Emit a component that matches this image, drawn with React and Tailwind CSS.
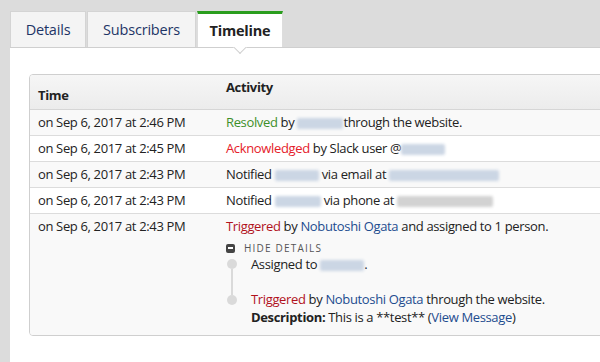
import React from 'react';

const Blur = ({ w, gray }) => (
  <span
    className={`inline-block align-middle h-[11px] rounded-[2px] blur-[1.5px] ${gray ? 'bg-[#d2d2d2]' : 'bg-[#cbd6e4]'}`}
    style={{ width: w }}
  />
);

const rows = [
  {
    time: 'on Sep 6, 2017 at 2:46 PM',
    activity: (
      <>
        <span className="text-[#3d8f2a]">Resolved</span> by <Blur w={46} />through the website.
      </>
    ),
  },
  {
    time: 'on Sep 6, 2017 at 2:45 PM',
    activity: (
      <>
        <span className="text-[#e5202a]">Acknowledged</span> by Slack user @<Blur w={44} />
      </>
    ),
  },
  {
    time: 'on Sep 6, 2017 at 2:43 PM',
    activity: (
      <>
        Notified <Blur w={44} /> via email at <Blur w={110} />
      </>
    ),
  },
  {
    time: 'on Sep 6, 2017 at 2:43 PM',
    activity: (
      <>
        Notified <Blur w={46} /> via phone at <Blur w={96} gray />
      </>
    ),
  },
];

const Tab = ({ label, active, width }) => (
  <div
    className={`h-[36px] flex items-center justify-center border border-b-0 text-[14.5px] tracking-[-0.2px] ${width} ${
      active
        ? 'bg-white border-[#ddd] border-t-[3px] border-t-[#2a9d1e] font-bold text-[#222] pt-[1px]'
        : 'bg-[#f4f4f4] border-[#d4d4d4] text-[#1e3466]'
    }`}
  >
    {label}
  </div>
);

export default function App() {
  return (
    <div className="w-[600px] h-[362px] overflow-hidden bg-[#dcdcdc] text-[13px] tracking-[-0.35px] text-[#222] font-['Open_Sans','Liberation_Sans',sans-serif]">
      <div className="flex gap-[1px] pl-[10px] pt-[11px]">
        <Tab label="Details" width="w-[76px]" />
        <Tab label="Subscribers" width="w-[109px]" />
        <Tab label="Timeline" width="w-[86px]" active />
      </div>
      <div className="relative ml-[10px] h-full bg-white border-t border-[#cfcfcf] pt-[26px] pl-[19px]">
        <div className="absolute left-[223px] -top-[1px] w-[14px] h-[8px] overflow-hidden">
          <div className="w-[10px] h-[10px] bg-white border-r border-b border-[#cfcfcf] rotate-45 mx-auto -mt-[5px]" />
        </div>
        <div className="w-[620px] border border-[#cfcfcf] rounded-[4px] overflow-hidden">
          <div className="flex h-[35px] bg-gradient-to-b from-[#f6f6f6] to-[#ececec] border-b border-[#d6d6d6] font-bold">
            <div className="w-[188px] pl-[8px] flex items-end pb-[4px]">Time</div>
            <div className="flex-1 pl-[8px] pt-[3px]">Activity</div>
          </div>
          {rows.map((r, i) => (
            <div
              key={i}
              className={`flex h-[26px] items-center border-b border-[#dcdcdc] ${i % 2 === 0 ? 'bg-[#f9f9f9]' : 'bg-white'}`}
            >
              <div className="w-[188px] pl-[8px]">{r.time}</div>
              <div className="flex-1 pl-[8px]">{r.activity}</div>
            </div>
          ))}
          <div className="flex bg-[#f9f9f9] h-[121px] pt-[3px] leading-[18px]">
            <div className="w-[188px] pl-[8px]">on Sep 6, 2017 at 2:43 PM</div>
            <div className="flex-1 pl-[8px]">
              <div>
                <span className="text-[#b1121c]">Triggered</span> by{' '}
                <span className="text-[#1d4c8f]">Nobutoshi Ogata</span> and assigned to 1 person.
              </div>
              <div className="flex items-center gap-[9px] mt-[6px] text-[10px] leading-[14px] tracking-[1.2px] text-[#555]">
                <span className="w-[9px] h-[9px] rounded-[2px] bg-[#444] flex items-center justify-center">
                  <span className="w-[5px] h-[2px] bg-white" />
                </span>
                HIDE DETAILS
              </div>
              <div className="flex">
                <div className="w-[11px] flex flex-col items-center pt-[4px]">
                  <span className="w-[10px] h-[10px] rounded-full bg-[#dadada]" />
                  <span className="w-[2px] h-[26px] bg-[#dadada]" />
                  <span className="w-[10px] h-[10px] rounded-full bg-[#dadada]" />
                </div>
                <div className="pl-[14px]">
                  <div>
                    Assigned to <Blur w={44} />.
                  </div>
                  <div className="mt-[17px]">
                    <span className="text-[#b1121c]">Triggered</span> by{' '}
                    <span className="text-[#1d4c8f]">Nobutoshi Ogata</span> through the website.
                  </div>
                  <div>
                    <span className="font-bold">Description:</span> This is a **test** (
                    <span className="text-[#1d4c8f]">View Message</span>)
                  </div>
                </div>
              </div>
            </div>
          </div>
        </div>
      </div>
    </div>
  );
}
